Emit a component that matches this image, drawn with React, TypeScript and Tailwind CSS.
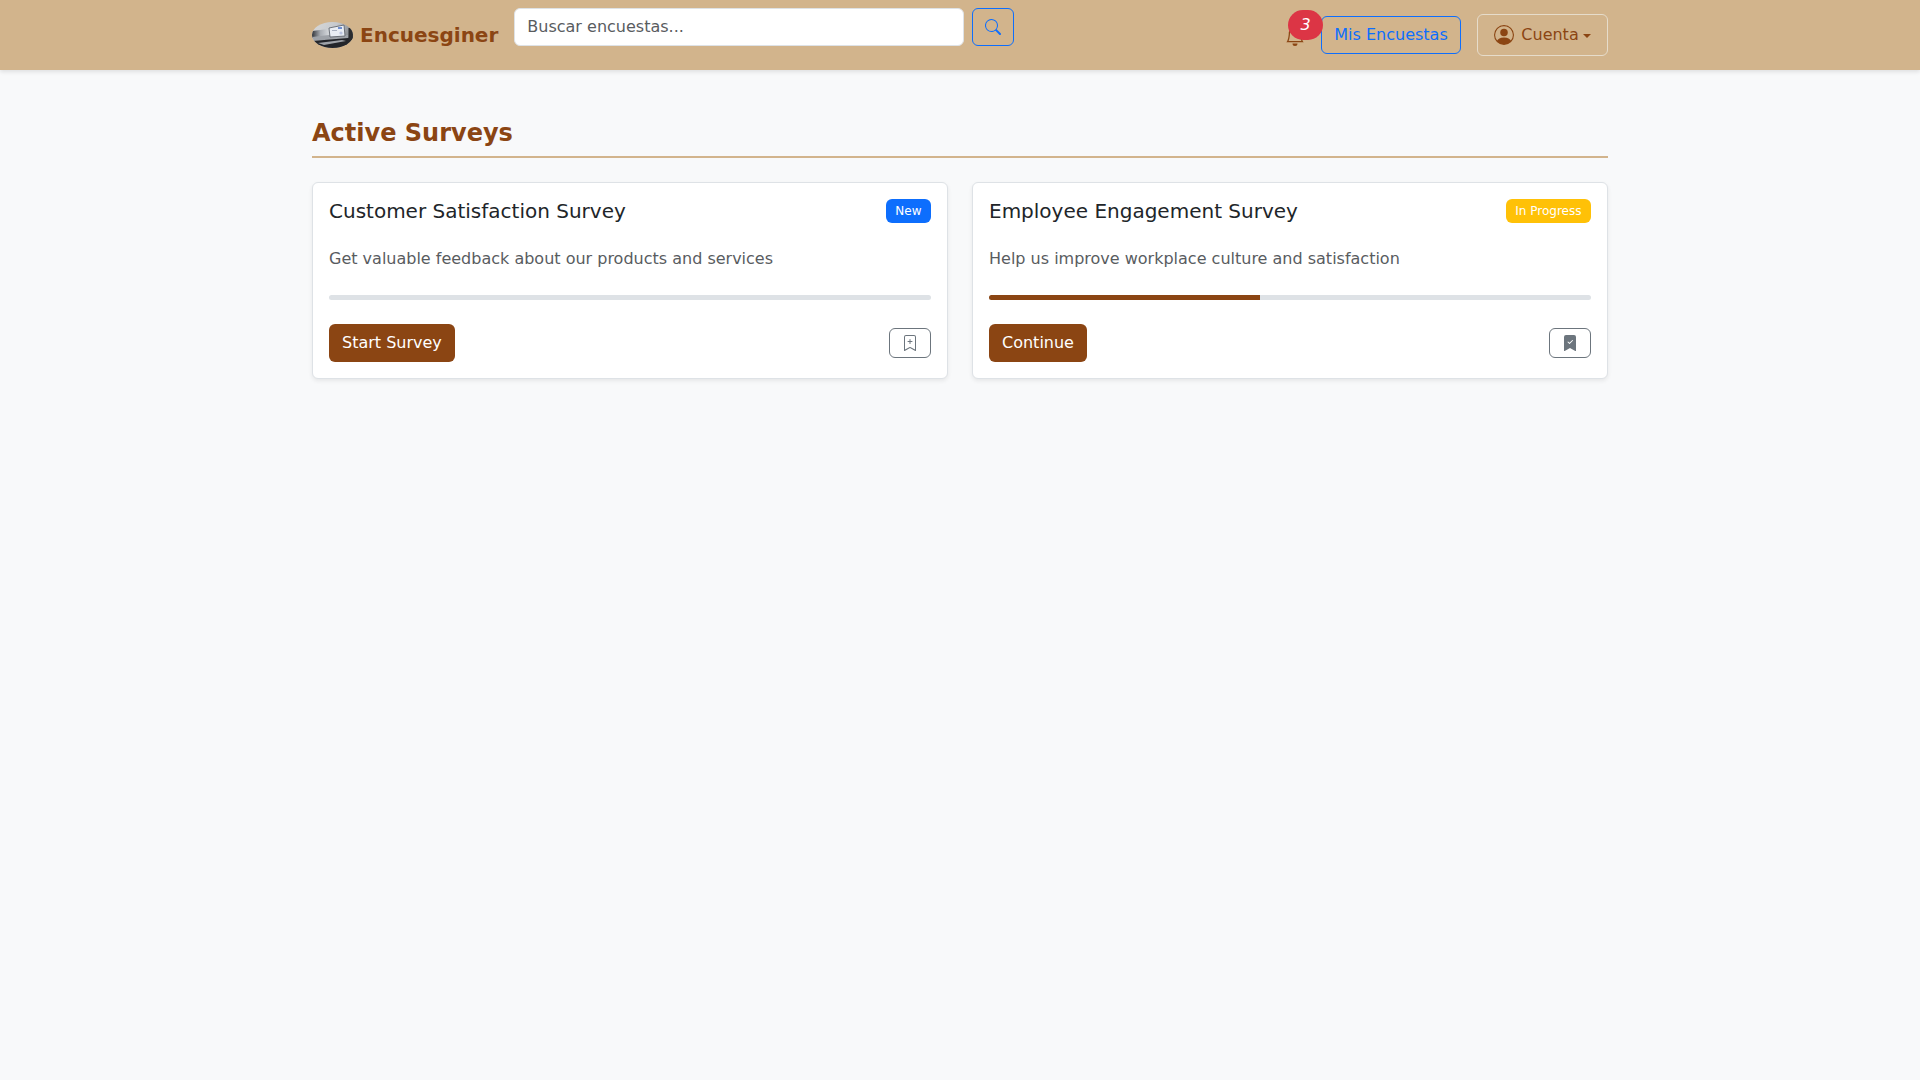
import React from "react";

const font = "font-['DejaVu_Sans',sans-serif]";

function Logo() {
  return (
    <svg width="41" height="26" viewBox="0 0 41 26" className="shrink-0">
      <defs>
        <clipPath id="lg"><ellipse cx="20.5" cy="13" rx="20.5" ry="13" /></clipPath>
        <linearGradient id="lgb" x1="0" y1="0" x2="1" y2="0.4">
          <stop offset="0" stopColor="#d9dadb" />
          <stop offset="0.55" stopColor="#c6c9cd" />
          <stop offset="1" stopColor="#7f8389" />
        </linearGradient>
        <linearGradient id="lgk" x1="0" y1="0" x2="1" y2="0">
          <stop offset="0" stopColor="#33363b" />
          <stop offset="0.5" stopColor="#a9adb3" />
          <stop offset="1" stopColor="#d5d8dc" />
        </linearGradient>
      </defs>
      <g clipPath="url(#lg)">
        <rect width="41" height="26" fill="url(#lgb)" />
        <polygon points="0,9 16,7 17,14 0,16" fill="url(#lgk)" />
        <polygon points="0,15 17,13 36,13 36,17 0,19" fill="#9ea2a8" />
        <polygon points="0,19 36,16 41,14 41,26 0,26" fill="#23252a" />
        <polygon points="6,21 30,18 34,19 12,23" fill="#9fa3a9" />
        <polygon points="17,6 32,3 33,14 18,15" fill="#e9edf4" stroke="#565b63" strokeWidth="0.8" />
        <rect x="26" y="5" width="4" height="2" fill="#6f8fd0" />
        <circle cx="29" cy="11" r="1.6" fill="#b9c3e0" />
        <rect x="20" y="8" width="5" height="1" fill="#aab2c2" />
        <rect x="36.5" y="6" width="4.5" height="12" fill="#2a2c30" />
      </g>
    </svg>
  );
}

function BookmarkPlus() {
  return (
    <svg width="16" height="16" viewBox="0 0 16 16" fill="#6c757d">
      <path d="M2 2a2 2 0 0 1 2-2h8a2 2 0 0 1 2 2v13.5a.5.5 0 0 1-.777.416L8 13.101l-5.223 2.815A.5.5 0 0 1 2 15.5V2zm2-1a1 1 0 0 0-1 1v12.566l4.723-2.482a.5.5 0 0 1 .554 0L13 14.566V2a1 1 0 0 0-1-1H4z" />
      <path d="M8 4a.5.5 0 0 1 .5.5V6H10a.5.5 0 0 1 0 1H8.5v1.5a.5.5 0 0 1-1 0V7H6a.5.5 0 0 1 0-1h1.5V4.5A.5.5 0 0 1 8 4z" />
    </svg>
  );
}

function BookmarkCheck() {
  return (
    <svg width="16" height="16" viewBox="0 0 16 16" fill="#6c757d">
      <path fillRule="evenodd" d="M2 15.5V2a2 2 0 0 1 2-2h8a2 2 0 0 1 2 2v13.5a.5.5 0 0 1-.74.439L8 13.069l-5.26 2.87A.5.5 0 0 1 2 15.5zm8.854-9.646a.5.5 0 0 0-.708-.708L7.5 7.793 6.354 6.646a.5.5 0 1 0-.708.708l1.5 1.5a.5.5 0 0 0 .708 0l3-3z" />
    </svg>
  );
}

function Card(props: {
  title: string;
  badge: string;
  badgeClass: string;
  text: string;
  progress: number;
  action: string;
  icon: React.ReactNode;
}) {
  return (
    <div className="flex h-[197px] flex-col rounded-[6px] border border-[#dee2e6] bg-white p-4 shadow-[0_2px_4px_rgba(0,0,0,0.075)]">
      <div className="flex items-center justify-between">
        <h5 className="text-[20px] leading-[24px] text-[#212529]">{props.title}</h5>
        <span className={`rounded-[6px] px-[9.5px] py-[5px] text-[12px] leading-[14px] text-white ${props.badgeClass}`}>
          {props.badge}
        </span>
      </div>
      <p className="mt-[24px] text-[16px] leading-[24px] text-[#595c5f]">{props.text}</p>
      <div className="mt-[24px] h-[5px] overflow-hidden rounded-[4px] bg-[#dee2e6]">
        <div className="h-full bg-[#8b4513]" style={{ width: `${props.progress}%` }} />
      </div>
      <div className="mt-[24px] flex items-center justify-between">
        <button className="h-[38px] rounded-[6px] bg-[#8b4513] px-[13px] text-[16px] text-white">{props.action}</button>
        <button className="flex h-[30px] w-[42px] items-center justify-center rounded-[6px] border border-[#6c757d]">
          {props.icon}
        </button>
      </div>
    </div>
  );
}

export default function App() {
  return (
    <div className={`min-h-[1080px] bg-[#f8f9fa] ${font}`}>
      <nav className="h-[70px] bg-[#d2b48c] shadow-[0_2px_4px_rgba(0,0,0,0.1)]">
        <div className="mx-auto flex h-full w-[1296px] items-center">
          <div className="flex items-center">
            <Logo />
            <span className="ml-[7px] text-[20px] font-bold text-[#8b4513]">Encuesginer</span>
          </div>
          <div className="mb-[16px] ml-[16px] flex gap-2">
            <div className="flex h-[38px] w-[450px] items-center rounded-[6px] border border-[#dee2e6] bg-white px-[12px] text-[16px] text-[#595c5f]">
              Buscar encuestas...
            </div>
            <button className="flex h-[38px] w-[42px] items-center justify-center rounded-[6px] border border-[#0d6efd]">
              <svg width="16" height="16" viewBox="0 0 16 16" fill="#0d6efd">
                <path d="M11.742 10.344a6.5 6.5 0 1 0-1.397 1.398h-.001c.03.04.062.078.098.115l3.85 3.85a1 1 0 0 0 1.415-1.414l-3.85-3.85a1.007 1.007 0 0 0-.115-.1zM12 6.5a5.5 5.5 0 1 1-11 0 5.5 5.5 0 0 1 11 0z" />
              </svg>
            </button>
          </div>
          <div className="ml-auto flex items-center">
            <div className="relative mr-[-1px] h-[24px] w-[35px]">
              <svg className="absolute left-[-2px] top-[3px]" width="20" height="20" viewBox="0 0 16 16" fill="#8b4513">
                <path d="M8 16a2 2 0 0 0 2-2H6a2 2 0 0 0 2 2zM8 1.918l-.797.161A4.002 4.002 0 0 0 4 6c0 .628-.134 2.197-.459 3.742-.16.767-.376 1.566-.663 2.258h10.244c-.287-.692-.502-1.49-.663-2.258C12.134 8.197 12 6.628 12 6a4.002 4.002 0 0 0-3.203-3.92L8 1.917zM14.22 12c.223.447.481.801.78 1H1c.299-.199.557-.553.78-1C2.68 10.2 3 6.88 3 6c0-2.42 1.72-4.44 4.005-4.901a1 1 0 1 1 1.99 0A5.002 5.002 0 0 1 13 6c0 .88.32 4.2 1.22 6z" />
              </svg>
              <span className="absolute left-[1px] top-[-13px] flex h-[30px] w-[35px] items-center justify-center rounded-full bg-[#dc3545] text-[16px] italic text-white">
                3
              </span>
            </div>
            <button className="h-[38px] w-[140px] rounded-[6px] border border-[#0d6efd] text-[16px] text-[#0d6efd]">
              Mis Encuestas
            </button>
            <button className="ml-4 flex h-[42px] w-[131px] items-center justify-center rounded-[6px] border border-[#e6dccb] text-[16px] text-[#8b4513]">
              <svg width="20" height="20" viewBox="0 0 16 16" fill="#8b4513">
                <path d="M11 6a3 3 0 1 1-6 0 3 3 0 0 1 6 0z" />
                <path fillRule="evenodd" d="M0 8a8 8 0 1 1 16 0A8 8 0 0 1 0 8zm8-7a7 7 0 0 0-5.468 11.37C3.242 11.226 4.805 10 8 10s4.757 1.225 5.468 2.37A7 7 0 0 0 8 1z" />
              </svg>
              <span className="ml-[7px]">Cuenta</span>
              <span className="ml-[4px] mt-[1px] border-x-[4.8px] border-t-[4.8px] border-x-transparent border-t-[#8b4513]" />
            </button>
          </div>
        </div>
      </nav>
      <main className="mx-auto w-[1296px] pt-[48px]">
        <h2 className="border-b-2 border-[#d2b48c] pb-[8px] text-[24px] font-bold leading-[30px] text-[#8b4513]">
          Active Surveys
        </h2>
        <div className="mt-[24px] grid grid-cols-2 gap-[24px]">
          <Card
            title="Customer Satisfaction Survey"
            badge="New"
            badgeClass="bg-[#0d6efd]"
            text="Get valuable feedback about our products and services"
            progress={0}
            action="Start Survey"
            icon={<BookmarkPlus />}
          />
          <Card
            title="Employee Engagement Survey"
            badge="In Progress"
            badgeClass="bg-[#ffc107]"
            text="Help us improve workplace culture and satisfaction"
            progress={45}
            action="Continue"
            icon={<BookmarkCheck />}
          />
        </div>
      </main>
    </div>
  );
}
